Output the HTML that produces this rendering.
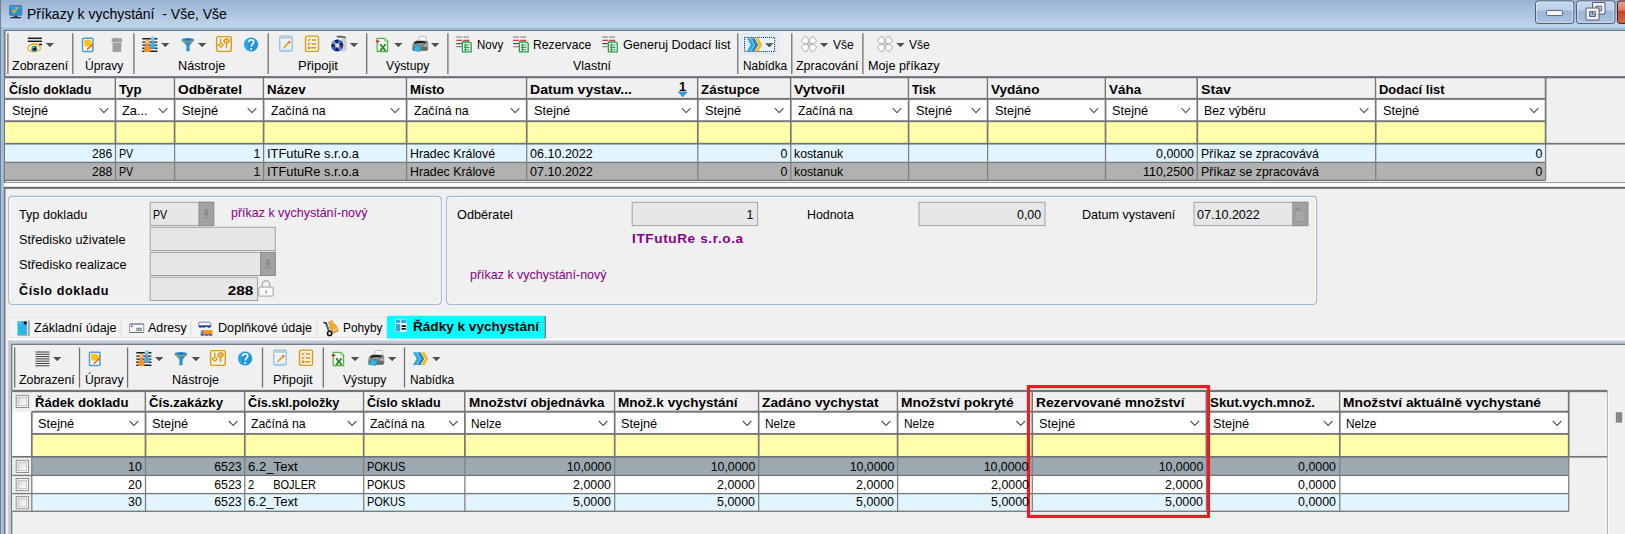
<!DOCTYPE html>
<html lang="cs"><head><meta charset="utf-8"><title>Příkazy k vychystání</title>
<style>
html,body{margin:0;padding:0;}
body{width:1625px;height:534px;position:relative;overflow:hidden;background:#f0f0f0;font-family:"Liberation Sans",sans-serif;font-size:13px;color:#000;}
div,span.t,svg{position:absolute;box-sizing:border-box;}
span.t{white-space:pre;display:block;}
svg{overflow:visible;}

</style></head>
<body>
<svg id="bg" width="1625" height="534" viewBox="0 0 1625 534" style="left:0;top:0"><defs>
<linearGradient id="gTitle" x1="0" y1="0" x2="0" y2="1"><stop offset="0" stop-color="#98b3d1"/><stop offset="1" stop-color="#c0d6ee"/></linearGradient>
<linearGradient id="gBtnT" x1="0" y1="0" x2="0" y2="1"><stop offset="0" stop-color="#c3d6ec"/><stop offset="0.42" stop-color="#bdd2ea"/><stop offset="0.43" stop-color="#9cb6d6"/><stop offset="1" stop-color="#a9c3e1"/></linearGradient>
<linearGradient id="gBtnR" x1="0" y1="0" x2="0" y2="1"><stop offset="0" stop-color="#e3a08f"/><stop offset="0.42" stop-color="#d8806c"/><stop offset="0.43" stop-color="#c0432a"/><stop offset="1" stop-color="#d26a4c"/></linearGradient>
<linearGradient id="gChk" x1="0" y1="0" x2="1" y2="1"><stop offset="0" stop-color="#d4d8dc"/><stop offset="1" stop-color="#ffffff"/></linearGradient>
</defs>
<rect x="0" y="0" width="1625" height="27.3" fill="url(#gTitle)" />
<rect x="0" y="27.3" width="1625" height="3" fill="#9db8da" />
<rect x="0" y="27" width="4.2" height="534" fill="#a4bfdf" />
<rect x="0" y="0" width="0.9" height="534" fill="#70798f" />
<rect x="4.2" y="30" width="1625" height="534" fill="#f0f0f0" />
<rect x="4" y="29.95" width="1621" height="1.1" fill="#797d84" />
<rect x="3.9" y="30" width="1.6" height="153" fill="#767676" />
<rect x="3.9" y="187" width="1.6" height="347" fill="#767676" />
<rect x="1535.6" y="1" width="38.2" height="22.4" rx="2.5" fill="url(#gBtnT)" stroke="#45526e" stroke-width="1"/>
<rect x="1536.6" y="2" width="36.2" height="20.4" rx="1.8" fill="none" stroke="#ffffff" stroke-opacity="0.55" stroke-width="1"/>
<rect x="1576.6" y="1" width="38.2" height="22.4" rx="2.5" fill="url(#gBtnT)" stroke="#45526e" stroke-width="1"/>
<rect x="1577.6" y="2" width="36.2" height="20.4" rx="1.8" fill="none" stroke="#ffffff" stroke-opacity="0.55" stroke-width="1"/>
<rect x="1617.5" y="1" width="20" height="22.4" rx="2.5" fill="url(#gBtnR)" stroke="#4a1a14" stroke-width="1"/>
<rect x="1546.6" y="10.4" width="16" height="5.2" rx="1" fill="#f4f4f4" stroke="#4a5068" stroke-width="0.9"/>
<path d="M1592.5 2.5h12.5v11.5h-12.5z M1596 6.2h5.5v4.6h-5.5z" fill="#f2f2f2" fill-rule="evenodd" stroke="#4a5068" stroke-width="0.9"/>
<path d="M1586 8h13v12h-13z M1589.6 11.6h5.8v4.9h-5.8z" fill="#f2f2f2" fill-rule="evenodd" stroke="#4a5068" stroke-width="0.9"/>
<rect x="7.25" y="33.2" width="1.3" height="40.8" fill="#727272" />
<rect x="72.15" y="33.2" width="1.3" height="40.8" fill="#727272" />
<rect x="133.25" y="33.2" width="1.3" height="40.8" fill="#727272" />
<rect x="267.55" y="33.2" width="1.3" height="40.8" fill="#727272" />
<rect x="366.05" y="33.2" width="1.3" height="40.8" fill="#727272" />
<rect x="447.25" y="33.2" width="1.3" height="40.8" fill="#727272" />
<rect x="737.15" y="33.2" width="1.3" height="40.8" fill="#727272" />
<rect x="791.15" y="33.2" width="1.3" height="40.8" fill="#727272" />
<rect x="862.25" y="33.2" width="1.3" height="40.8" fill="#727272" />
<path d="M45.4 44.1h9l-4.5 4.6z" fill="#ffffff" opacity="0.8"/>
<path d="M45.7 42.9h8.4l-4.2 4.3z" fill="#505050"/>
<path d="M160.8 44.1h9l-4.5 4.6z" fill="#ffffff" opacity="0.8"/>
<path d="M161.1 42.9h8.4l-4.2 4.3z" fill="#505050"/>
<path d="M197.6 44.1h9l-4.5 4.6z" fill="#ffffff" opacity="0.8"/>
<path d="M197.9 42.9h8.4l-4.2 4.3z" fill="#505050"/>
<path d="M349.5 44.1h9l-4.5 4.6z" fill="#ffffff" opacity="0.8"/>
<path d="M349.8 42.9h8.4l-4.2 4.3z" fill="#505050"/>
<path d="M393.8 44.1h9l-4.5 4.6z" fill="#ffffff" opacity="0.8"/>
<path d="M394.1 42.9h8.4l-4.2 4.3z" fill="#505050"/>
<path d="M430.7 44.1h9l-4.5 4.6z" fill="#ffffff" opacity="0.8"/>
<path d="M431 42.9h8.4l-4.2 4.3z" fill="#505050"/>
<rect x="741" y="34" width="37" height="20" rx="2.5" fill="#e5f1fb" stroke="#cde4f7" stroke-width="1"/>
<rect x="744.5" y="37.4" width="30.2" height="14.2" fill="none" stroke="#111" stroke-width="1" stroke-dasharray="1 1.05"/>
<path d="M764.8 44.4h9l-4.5 4.6z" fill="#ffffff" opacity="0.8"/>
<path d="M765.1 43.2h8.4l-4.2 4.3z" fill="#505050"/>
<path d="M819.6 44.1h9l-4.5 4.6z" fill="#ffffff" opacity="0.8"/>
<path d="M819.9 42.9h8.4l-4.2 4.3z" fill="#505050"/>
<path d="M896 44.1h9l-4.5 4.6z" fill="#ffffff" opacity="0.8"/>
<path d="M896.3 42.9h8.4l-4.2 4.3z" fill="#505050"/>
<rect x="5" y="77" width="1540.6" height="21.9" fill="#f0f0f0" />
<rect x="5" y="98.9" width="1540.6" height="22.3" fill="#ffffff" />
<rect x="5" y="121.2" width="1540.6" height="22.5" fill="#ffffac" />
<rect x="5" y="143.7" width="1540.6" height="18.7" fill="#e2f4fe" />
<rect x="5" y="162.4" width="1540.6" height="18" fill="#b1b1b1" />
<rect x="5.7" y="78.35" width="109.1" height="1.1" fill="#ffffff" />
<rect x="5.7" y="77.9" width="1.1" height="20.3" fill="#ffffff" />
<rect x="5.7" y="99.6" width="109.1" height="1" fill="#fbfbfb" />
<rect x="116.2" y="78.35" width="57.7" height="1.1" fill="#ffffff" />
<rect x="116.2" y="77.9" width="1.1" height="20.3" fill="#ffffff" />
<rect x="116.2" y="99.6" width="57.7" height="1" fill="#fbfbfb" />
<rect x="175.3" y="78.35" width="87.6" height="1.1" fill="#ffffff" />
<rect x="175.3" y="77.9" width="1.1" height="20.3" fill="#ffffff" />
<rect x="175.3" y="99.6" width="87.6" height="1" fill="#fbfbfb" />
<rect x="264.3" y="78.35" width="141.6" height="1.1" fill="#ffffff" />
<rect x="264.3" y="77.9" width="1.1" height="20.3" fill="#ffffff" />
<rect x="264.3" y="99.6" width="141.6" height="1" fill="#fbfbfb" />
<rect x="407.3" y="78.35" width="118.7" height="1.1" fill="#ffffff" />
<rect x="407.3" y="77.9" width="1.1" height="20.3" fill="#ffffff" />
<rect x="407.3" y="99.6" width="118.7" height="1" fill="#fbfbfb" />
<rect x="527.4" y="78.35" width="169.7" height="1.1" fill="#ffffff" />
<rect x="527.4" y="77.9" width="1.1" height="20.3" fill="#ffffff" />
<rect x="527.4" y="99.6" width="169.7" height="1" fill="#fbfbfb" />
<rect x="698.5" y="78.35" width="91.6" height="1.1" fill="#ffffff" />
<rect x="698.5" y="77.9" width="1.1" height="20.3" fill="#ffffff" />
<rect x="698.5" y="99.6" width="91.6" height="1" fill="#fbfbfb" />
<rect x="791.5" y="78.35" width="116.4" height="1.1" fill="#ffffff" />
<rect x="791.5" y="77.9" width="1.1" height="20.3" fill="#ffffff" />
<rect x="791.5" y="99.6" width="116.4" height="1" fill="#fbfbfb" />
<rect x="909.3" y="78.35" width="77.6" height="1.1" fill="#ffffff" />
<rect x="909.3" y="77.9" width="1.1" height="20.3" fill="#ffffff" />
<rect x="909.3" y="99.6" width="77.6" height="1" fill="#fbfbfb" />
<rect x="988.3" y="78.35" width="116.5" height="1.1" fill="#ffffff" />
<rect x="988.3" y="77.9" width="1.1" height="20.3" fill="#ffffff" />
<rect x="988.3" y="99.6" width="116.5" height="1" fill="#fbfbfb" />
<rect x="1106.2" y="78.35" width="90.4" height="1.1" fill="#ffffff" />
<rect x="1106.2" y="77.9" width="1.1" height="20.3" fill="#ffffff" />
<rect x="1106.2" y="99.6" width="90.4" height="1" fill="#fbfbfb" />
<rect x="1198" y="78.35" width="177" height="1.1" fill="#ffffff" />
<rect x="1198" y="77.9" width="1.1" height="20.3" fill="#ffffff" />
<rect x="1198" y="99.6" width="177" height="1" fill="#fbfbfb" />
<rect x="1376.4" y="78.35" width="168.5" height="1.1" fill="#ffffff" />
<rect x="1376.4" y="77.9" width="1.1" height="20.3" fill="#ffffff" />
<rect x="1376.4" y="99.6" width="168.5" height="1" fill="#fbfbfb" />
<rect x="5" y="76.05" width="1620" height="2.3" fill="#70757b" />
<rect x="5" y="97.9" width="1540.6" height="2" fill="#767676" />
<rect x="5" y="120.25" width="1540.6" height="1.9" fill="#767676" />
<rect x="5" y="142.85" width="1620" height="1.7" fill="#6f7276" />
<rect x="5" y="161.75" width="1540.6" height="1.3" fill="#767676" />
<rect x="5" y="179.75" width="1540.6" height="1.3" fill="#767676" />
<rect x="114.65" y="78" width="1.7" height="65.7" fill="#767676" />
<rect x="114.875" y="143.7" width="1.25" height="36.7" fill="#7e7e7e" />
<rect x="116.35" y="78.2" width="1" height="19.9" fill="#ffffff" />
<rect x="173.75" y="78" width="1.7" height="65.7" fill="#767676" />
<rect x="173.975" y="143.7" width="1.25" height="36.7" fill="#7e7e7e" />
<rect x="175.45" y="78.2" width="1" height="19.9" fill="#ffffff" />
<rect x="262.75" y="78" width="1.7" height="65.7" fill="#767676" />
<rect x="262.975" y="143.7" width="1.25" height="36.7" fill="#7e7e7e" />
<rect x="264.45" y="78.2" width="1" height="19.9" fill="#ffffff" />
<rect x="405.75" y="78" width="1.7" height="65.7" fill="#767676" />
<rect x="405.975" y="143.7" width="1.25" height="36.7" fill="#7e7e7e" />
<rect x="407.45" y="78.2" width="1" height="19.9" fill="#ffffff" />
<rect x="525.85" y="78" width="1.7" height="65.7" fill="#767676" />
<rect x="526.075" y="143.7" width="1.25" height="36.7" fill="#7e7e7e" />
<rect x="527.55" y="78.2" width="1" height="19.9" fill="#ffffff" />
<rect x="696.95" y="78" width="1.7" height="65.7" fill="#767676" />
<rect x="697.175" y="143.7" width="1.25" height="36.7" fill="#7e7e7e" />
<rect x="698.65" y="78.2" width="1" height="19.9" fill="#ffffff" />
<rect x="789.95" y="78" width="1.7" height="65.7" fill="#767676" />
<rect x="790.175" y="143.7" width="1.25" height="36.7" fill="#7e7e7e" />
<rect x="791.65" y="78.2" width="1" height="19.9" fill="#ffffff" />
<rect x="907.75" y="78" width="1.7" height="65.7" fill="#767676" />
<rect x="907.975" y="143.7" width="1.25" height="36.7" fill="#7e7e7e" />
<rect x="909.45" y="78.2" width="1" height="19.9" fill="#ffffff" />
<rect x="986.75" y="78" width="1.7" height="65.7" fill="#767676" />
<rect x="986.975" y="143.7" width="1.25" height="36.7" fill="#7e7e7e" />
<rect x="988.45" y="78.2" width="1" height="19.9" fill="#ffffff" />
<rect x="1104.65" y="78" width="1.7" height="65.7" fill="#767676" />
<rect x="1104.88" y="143.7" width="1.25" height="36.7" fill="#7e7e7e" />
<rect x="1106.35" y="78.2" width="1" height="19.9" fill="#ffffff" />
<rect x="1196.45" y="78" width="1.7" height="65.7" fill="#767676" />
<rect x="1196.67" y="143.7" width="1.25" height="36.7" fill="#7e7e7e" />
<rect x="1198.15" y="78.2" width="1" height="19.9" fill="#ffffff" />
<rect x="1374.85" y="78" width="1.7" height="65.7" fill="#767676" />
<rect x="1375.08" y="143.7" width="1.25" height="36.7" fill="#7e7e7e" />
<rect x="1376.55" y="78.2" width="1" height="19.9" fill="#ffffff" />
<rect x="1544.75" y="78" width="1.7" height="65.7" fill="#767676" />
<rect x="1544.97" y="143.7" width="1.25" height="36.7" fill="#7e7e7e" />
<path d="M99.6 108.2l4.3 4.4 4.3-4.4" fill="none" stroke="#555" stroke-width="1.1"/>
<path d="M158.7 108.2l4.3 4.4 4.3-4.4" fill="none" stroke="#555" stroke-width="1.1"/>
<path d="M247.7 108.2l4.3 4.4 4.3-4.4" fill="none" stroke="#555" stroke-width="1.1"/>
<path d="M390.7 108.2l4.3 4.4 4.3-4.4" fill="none" stroke="#555" stroke-width="1.1"/>
<path d="M510.8 108.2l4.3 4.4 4.3-4.4" fill="none" stroke="#555" stroke-width="1.1"/>
<path d="M681.9 108.2l4.3 4.4 4.3-4.4" fill="none" stroke="#555" stroke-width="1.1"/>
<path d="M774.9 108.2l4.3 4.4 4.3-4.4" fill="none" stroke="#555" stroke-width="1.1"/>
<path d="M892.7 108.2l4.3 4.4 4.3-4.4" fill="none" stroke="#555" stroke-width="1.1"/>
<path d="M971.7 108.2l4.3 4.4 4.3-4.4" fill="none" stroke="#555" stroke-width="1.1"/>
<path d="M1089.6 108.2l4.3 4.4 4.3-4.4" fill="none" stroke="#555" stroke-width="1.1"/>
<path d="M1181.4 108.2l4.3 4.4 4.3-4.4" fill="none" stroke="#555" stroke-width="1.1"/>
<path d="M1359.8 108.2l4.3 4.4 4.3-4.4" fill="none" stroke="#555" stroke-width="1.1"/>
<path d="M1529.7 108.2l4.3 4.4 4.3-4.4" fill="none" stroke="#555" stroke-width="1.1"/>
<path d="M678.3 91.9h8.8l-4.4 5z" fill="#2ea2ea" stroke="#2a5aa8" stroke-width="0.5"/>
<rect x="4" y="182.2" width="1621" height="1" fill="#8d8d8d" />
<rect x="3.9" y="183.2" width="1625" height="3.6" fill="#ffffff" />
<rect x="4" y="186.8" width="1621" height="2" fill="#6a6a6a" />
<rect x="8.6" y="196.4" width="432.59999999999997" height="107.9" rx="3.5" fill="none" stroke="#a3bbd9" stroke-width="1.2"/>
<rect x="9.7" y="197.5" width="430.4" height="105.7" rx="2.8" fill="none" stroke="#ffffff" stroke-opacity="0.8" stroke-width="0.9"/>
<rect x="446.6" y="196.4" width="869.9999999999999" height="107.9" rx="3.5" fill="none" stroke="#a3bbd9" stroke-width="1.2"/>
<rect x="447.70000000000005" y="197.5" width="867.7999999999998" height="105.7" rx="2.8" fill="none" stroke="#ffffff" stroke-opacity="0.8" stroke-width="0.9"/>
<rect x="150.2" y="202.3" width="63.5" height="23.299999999999983" fill="#e6e6e6" stroke="#a2a2a2" stroke-width="1"/>
<rect x="199.0" y="202.3" width="14.7" height="23.299999999999983" fill="#a2a2a2" stroke="#8c8c8c" stroke-width="1"/>
<path d="M205 209.1h2.6v3.6h2.4l-3.7 3.6-3.7-3.6h2.4z M202.7 217.2h7.2v1h-7.2z" fill="#8b8b8b"/>
<rect x="150.2" y="227.3" width="125.10000000000002" height="23.19999999999999" fill="#e6e6e6" stroke="#a2a2a2" stroke-width="1"/>
<rect x="150.2" y="252.4" width="125.10000000000002" height="23.099999999999994" fill="#e6e6e6" stroke="#a2a2a2" stroke-width="1"/>
<rect x="260.6" y="252.4" width="14.7" height="23.099999999999994" fill="#a2a2a2" stroke="#8c8c8c" stroke-width="1"/>
<path d="M266.7 259.1h2.6v3.6h2.4l-3.7 3.6-3.7-3.6h2.4z M264.4 267.2h7.2v1h-7.2z" fill="#8b8b8b"/>
<rect x="150.2" y="277.2" width="107.30000000000001" height="23.30000000000001" fill="#e6e6e6" stroke="#a2a2a2" stroke-width="1"/>
<rect x="632.2" y="202.3" width="125.39999999999998" height="23.299999999999983" fill="#e6e6e6" stroke="#a2a2a2" stroke-width="1"/>
<rect x="919" y="202.3" width="126" height="23.299999999999983" fill="#e6e6e6" stroke="#a2a2a2" stroke-width="1"/>
<rect x="1194" y="202.3" width="113.79999999999995" height="23.299999999999983" fill="#e6e6e6" stroke="#a2a2a2" stroke-width="1"/>
<rect x="1292.8" y="202.3" width="15" height="23.299999999999983" fill="#a2a2a2" stroke="#8c8c8c" stroke-width="1"/>
<path d="M1295.4 207.6h3.6v2.2h-3.6z" fill="#8a8a8a"/><path d="M1295.6 210.6h9.400v11h-9.400z" fill="none" stroke="#929292" stroke-width="0.800"/><path d="M1296.2 212h1.800v1.800h-1.800z M1299.400 212h2.200v1.800h-2.200z M1302.800 212h1.600v1.800h-1.600z M1296.2 215.600h1.800v1.800h-1.800z M1299.400 215.600h2.200v1.800h-2.200z M1302.800 215.600h1.600v1.800h-1.600z M1296.2 219.200h1.800v1.800h-1.800z M1299.400 219.200h2.200v1.800h-2.200z M1302.800 219.200h1.600v1.800h-1.600z" fill="#adadad"/>
<rect x="8.8" y="317.6" width="112.0" height="19.6" fill="#f3f3f3" stroke="#e6e6e6" stroke-width="1"/>
<rect x="121.7" y="317.6" width="69.10000000000001" height="19.6" fill="#f3f3f3" stroke="#e6e6e6" stroke-width="1"/>
<rect x="191.7" y="317.6" width="124.60000000000002" height="19.6" fill="#f3f3f3" stroke="#e6e6e6" stroke-width="1"/>
<rect x="317.2" y="317.6" width="68.60000000000002" height="19.6" fill="#f3f3f3" stroke="#e6e6e6" stroke-width="1"/>
<path d="M387 338.7v-20.6a2.3 2.3 0 0 1 2.3-2.3h155.4v22.9z" fill="#00ffff"/>
<rect x="544.65" y="316" width="1.1" height="22.6" fill="#5a5a5a" />
<rect x="8" y="338.7" width="1617" height="1.4" fill="#fafafa" />
<rect x="8.2" y="340.6" width="1625" height="3.2" fill="#bccbdd" />
<rect x="8.2" y="340.6" width="3.1" height="534" fill="#bccbdd" />
<rect x="11" y="343.65" width="1614" height="1.3" fill="#72777d" />
<rect x="11.05" y="344" width="1.3" height="190" fill="#72777d" />
<rect x="14.05" y="347.4" width="1.3" height="40.2" fill="#727272" />
<rect x="78.85" y="347.4" width="1.3" height="40.2" fill="#727272" />
<rect x="126.95" y="347.4" width="1.3" height="40.2" fill="#727272" />
<rect x="261.85" y="347.4" width="1.3" height="40.2" fill="#727272" />
<rect x="322.65" y="347.4" width="1.3" height="40.2" fill="#727272" />
<rect x="403.85" y="347.4" width="1.3" height="40.2" fill="#727272" />
<path d="M52.7 358.1h9l-4.5 4.6z" fill="#ffffff" opacity="0.8"/>
<path d="M53 356.9h8.4l-4.2 4.3z" fill="#505050"/>
<path d="M154.7 358.1h9l-4.5 4.6z" fill="#ffffff" opacity="0.8"/>
<path d="M155 356.9h8.4l-4.2 4.3z" fill="#505050"/>
<path d="M191.4 358.1h9l-4.5 4.6z" fill="#ffffff" opacity="0.8"/>
<path d="M191.7 356.9h8.4l-4.2 4.3z" fill="#505050"/>
<path d="M350.5 358.1h9l-4.5 4.6z" fill="#ffffff" opacity="0.8"/>
<path d="M350.8 356.9h8.4l-4.2 4.3z" fill="#505050"/>
<path d="M387.7 358.1h9l-4.5 4.6z" fill="#ffffff" opacity="0.8"/>
<path d="M388 356.9h8.4l-4.2 4.3z" fill="#505050"/>
<path d="M431.9 358.1h9l-4.5 4.6z" fill="#ffffff" opacity="0.8"/>
<path d="M432.2 356.9h8.4l-4.2 4.3z" fill="#505050"/>
<rect x="12.3" y="390.8" width="1556.4" height="20.9" fill="#f0f0f0" />
<rect x="12.3" y="411.7" width="1556.4" height="22.2" fill="#ffffff" />
<rect x="12.3" y="433.9" width="1556.4" height="22.9" fill="#ffffac" />
<rect x="12.3" y="433.9" width="19.5" height="22.9" fill="#ffffff" />
<rect x="12.3" y="456.8" width="1556.4" height="18.6" fill="#9ca9b1" />
<rect x="12.3" y="456.8" width="19.5" height="18.6" fill="#f0f0f0" />
<rect x="12.3" y="475.4" width="1556.4" height="18.2" fill="#ffffff" />
<rect x="12.3" y="475.4" width="19.5" height="18.2" fill="#f0f0f0" />
<rect x="12.3" y="493.6" width="1556.4" height="17.7" fill="#e2f4fe" />
<rect x="12.3" y="493.6" width="19.5" height="17.7" fill="#f0f0f0" />
<rect x="32.5" y="392.15" width="112.3" height="1.1" fill="#ffffff" />
<rect x="32.5" y="391.7" width="1.1" height="19.3" fill="#ffffff" />
<rect x="32.5" y="412.4" width="112.3" height="1" fill="#fbfbfb" />
<rect x="146.2" y="392.15" width="97.9" height="1.1" fill="#ffffff" />
<rect x="146.2" y="391.7" width="1.1" height="19.3" fill="#ffffff" />
<rect x="146.2" y="412.4" width="97.9" height="1" fill="#fbfbfb" />
<rect x="245.5" y="392.15" width="117.5" height="1.1" fill="#ffffff" />
<rect x="245.5" y="391.7" width="1.1" height="19.3" fill="#ffffff" />
<rect x="245.5" y="412.4" width="117.5" height="1" fill="#fbfbfb" />
<rect x="364.4" y="392.15" width="99.8" height="1.1" fill="#ffffff" />
<rect x="364.4" y="391.7" width="1.1" height="19.3" fill="#ffffff" />
<rect x="364.4" y="412.4" width="99.8" height="1" fill="#fbfbfb" />
<rect x="465.6" y="392.15" width="148.4" height="1.1" fill="#ffffff" />
<rect x="465.6" y="391.7" width="1.1" height="19.3" fill="#ffffff" />
<rect x="465.6" y="412.4" width="148.4" height="1" fill="#fbfbfb" />
<rect x="615.4" y="392.15" width="142.6" height="1.1" fill="#ffffff" />
<rect x="615.4" y="391.7" width="1.1" height="19.3" fill="#ffffff" />
<rect x="615.4" y="412.4" width="142.6" height="1" fill="#fbfbfb" />
<rect x="759.4" y="392.15" width="137.5" height="1.1" fill="#ffffff" />
<rect x="759.4" y="391.7" width="1.1" height="19.3" fill="#ffffff" />
<rect x="759.4" y="412.4" width="137.5" height="1" fill="#fbfbfb" />
<rect x="898.3" y="392.15" width="133.3" height="1.1" fill="#ffffff" />
<rect x="898.3" y="391.7" width="1.1" height="19.3" fill="#ffffff" />
<rect x="898.3" y="412.4" width="133.3" height="1" fill="#fbfbfb" />
<rect x="1033" y="392.15" width="172.7" height="1.1" fill="#ffffff" />
<rect x="1033" y="391.7" width="1.1" height="19.3" fill="#ffffff" />
<rect x="1033" y="412.4" width="172.7" height="1" fill="#fbfbfb" />
<rect x="1207.1" y="392.15" width="132" height="1.1" fill="#ffffff" />
<rect x="1207.1" y="391.7" width="1.1" height="19.3" fill="#ffffff" />
<rect x="1207.1" y="412.4" width="132" height="1" fill="#fbfbfb" />
<rect x="1340.5" y="392.15" width="227.5" height="1.1" fill="#ffffff" />
<rect x="1340.5" y="391.7" width="1.1" height="19.3" fill="#ffffff" />
<rect x="1340.5" y="412.4" width="227.5" height="1" fill="#fbfbfb" />
<rect x="12.3" y="389.85" width="1595.2" height="2.3" fill="#70757b" />
<rect x="31.8" y="410.7" width="1536.9" height="2" fill="#767676" />
<rect x="31.8" y="432.95" width="1536.9" height="1.9" fill="#767676" />
<rect x="12.3" y="455.95" width="1595.2" height="1.7" fill="#6f7276" />
<rect x="12.3" y="474.75" width="1556.4" height="1.3" fill="#767676" />
<rect x="12.3" y="492.95" width="1556.4" height="1.3" fill="#767676" />
<rect x="12.3" y="510.65" width="1556.4" height="1.3" fill="#767676" />
<rect x="30.95" y="411.7" width="1.7" height="45.1" fill="#767676" />
<rect x="31.175" y="456.8" width="1.25" height="54.5" fill="#7e7e7e" />
<rect x="32.65" y="392" width="1" height="18.9" fill="#ffffff" />
<rect x="144.65" y="391.8" width="1.7" height="65" fill="#767676" />
<rect x="144.875" y="456.8" width="1.25" height="54.5" fill="#7e7e7e" />
<rect x="146.35" y="392" width="1" height="18.9" fill="#ffffff" />
<rect x="243.95" y="391.8" width="1.7" height="65" fill="#767676" />
<rect x="244.175" y="456.8" width="1.25" height="54.5" fill="#7e7e7e" />
<rect x="245.65" y="392" width="1" height="18.9" fill="#ffffff" />
<rect x="362.85" y="391.8" width="1.7" height="65" fill="#767676" />
<rect x="363.075" y="456.8" width="1.25" height="54.5" fill="#7e7e7e" />
<rect x="364.55" y="392" width="1" height="18.9" fill="#ffffff" />
<rect x="464.05" y="391.8" width="1.7" height="65" fill="#767676" />
<rect x="464.275" y="456.8" width="1.25" height="54.5" fill="#7e7e7e" />
<rect x="465.75" y="392" width="1" height="18.9" fill="#ffffff" />
<rect x="613.85" y="391.8" width="1.7" height="65" fill="#767676" />
<rect x="614.075" y="456.8" width="1.25" height="54.5" fill="#7e7e7e" />
<rect x="615.55" y="392" width="1" height="18.9" fill="#ffffff" />
<rect x="757.85" y="391.8" width="1.7" height="65" fill="#767676" />
<rect x="758.075" y="456.8" width="1.25" height="54.5" fill="#7e7e7e" />
<rect x="759.55" y="392" width="1" height="18.9" fill="#ffffff" />
<rect x="896.75" y="391.8" width="1.7" height="65" fill="#767676" />
<rect x="896.975" y="456.8" width="1.25" height="54.5" fill="#7e7e7e" />
<rect x="898.45" y="392" width="1" height="18.9" fill="#ffffff" />
<rect x="1031.45" y="391.8" width="1.7" height="65" fill="#767676" />
<rect x="1031.67" y="456.8" width="1.25" height="54.5" fill="#7e7e7e" />
<rect x="1033.15" y="392" width="1" height="18.9" fill="#ffffff" />
<rect x="1205.55" y="391.8" width="1.7" height="65" fill="#767676" />
<rect x="1205.78" y="456.8" width="1.25" height="54.5" fill="#7e7e7e" />
<rect x="1207.25" y="392" width="1" height="18.9" fill="#ffffff" />
<rect x="1338.95" y="391.8" width="1.7" height="65" fill="#767676" />
<rect x="1339.17" y="456.8" width="1.25" height="54.5" fill="#7e7e7e" />
<rect x="1340.65" y="392" width="1" height="18.9" fill="#ffffff" />
<rect x="1567.85" y="391.8" width="1.7" height="65" fill="#767676" />
<rect x="1568.08" y="456.8" width="1.25" height="54.5" fill="#7e7e7e" />
<path d="M129.6 421l4.3 4.4 4.3-4.4" fill="none" stroke="#555" stroke-width="1.1"/>
<path d="M228.9 421l4.3 4.4 4.3-4.4" fill="none" stroke="#555" stroke-width="1.1"/>
<path d="M347.8 421l4.3 4.4 4.3-4.4" fill="none" stroke="#555" stroke-width="1.1"/>
<path d="M449 421l4.3 4.4 4.3-4.4" fill="none" stroke="#555" stroke-width="1.1"/>
<path d="M598.8 421l4.3 4.4 4.3-4.4" fill="none" stroke="#555" stroke-width="1.1"/>
<path d="M742.8 421l4.3 4.4 4.3-4.4" fill="none" stroke="#555" stroke-width="1.1"/>
<path d="M881.7 421l4.3 4.4 4.3-4.4" fill="none" stroke="#555" stroke-width="1.1"/>
<path d="M1016.4 421l4.3 4.4 4.3-4.4" fill="none" stroke="#555" stroke-width="1.1"/>
<path d="M1190.5 421l4.3 4.4 4.3-4.4" fill="none" stroke="#555" stroke-width="1.1"/>
<path d="M1323.9 421l4.3 4.4 4.3-4.4" fill="none" stroke="#555" stroke-width="1.1"/>
<path d="M1552.8 421l4.3 4.4 4.3-4.4" fill="none" stroke="#555" stroke-width="1.1"/>
<rect x="16.2" y="395.3" width="12.4" height="12.2" fill="#f4f4f4" stroke="#8e8f8f" stroke-width="1"/>
<rect x="18.2" y="397.3" width="8.4" height="8.2" fill="url(#gChk)" stroke="#b8bcc0" stroke-width="0.8"/>
<rect x="16.2" y="460.3" width="12.4" height="12.2" fill="#f4f4f4" stroke="#8e8f8f" stroke-width="1"/>
<rect x="18.2" y="462.3" width="8.4" height="8.2" fill="url(#gChk)" stroke="#b8bcc0" stroke-width="0.8"/>
<rect x="16.2" y="478.5" width="12.4" height="12.2" fill="#f4f4f4" stroke="#8e8f8f" stroke-width="1"/>
<rect x="18.2" y="480.5" width="8.4" height="8.2" fill="url(#gChk)" stroke="#b8bcc0" stroke-width="0.8"/>
<rect x="16.2" y="496.6" width="12.4" height="12.2" fill="#f4f4f4" stroke="#8e8f8f" stroke-width="1"/>
<rect x="18.2" y="498.6" width="8.4" height="8.2" fill="url(#gChk)" stroke="#b8bcc0" stroke-width="0.8"/>
<rect x="1607" y="390" width="1.2" height="144" fill="#b4b4b4" />
<rect x="1608.3" y="392" width="1" height="142" fill="#fdfdfd" />
<rect x="1615.8" y="412.2" width="6.4" height="10.4" fill="#858585" />
<rect x="1028.5" y="386.6" width="180" height="129.8" fill="none" stroke="#ed1c24" stroke-width="3.2"/></svg>
<svg width="13.6" height="13.6" viewBox="0 0 16 16" style="left:8.9px;top:4.9px"><rect x="0.800" y="0.700" width="14.200" height="11.400" rx="1.200" fill="#2098d6" stroke="#6c6aa6" stroke-width="1.300"/><path d="M1.600 1.500h12.600v2.600h-12.600z" fill="#4ab2e6" opacity="0.500"/><path d="M3.800 5.600l2.200 3.200 4.200-6.200" fill="none" stroke="#fdb01e" stroke-width="1.700"/><path d="M6.200 12.600h3.600l.8 1.800h-5.200z" fill="#34386a"/><path d="M2.400 14.200h11.200c.5 0 .8.300.8.800v.7h-12.800v-.7c0-.5.300-.8.800-.8z" fill="#23264e"/></svg>
<span class="t" style="top:3.85px;line-height:19px;height:19px;font-size:15.45px;left:27.4px;transform-origin:0 50%;transform:scaleX(0.9062);">Příkazy k vychystání  - Vše, Vše</span>
<svg width="16" height="16" viewBox="0 0 16 16" style="left:27px;top:36.5px"><path d="M0.8 1.3h14.2" stroke="#222" stroke-width="1.6"/><path d="M0.8 4.3h14.2" stroke="#111" stroke-width="1.4"/><path d="M12 7.5h3" stroke="#222" stroke-width="1.7"/><path d="M0.6 11.4c2.2-5.2 10.6-5.4 13.2-.2c-2.6 4.6-10.8 4.8-13.2.2z" fill="#fdf8e0" stroke="#e3b21c" stroke-width="1.2"/><path d="M1 9.4c2.6-3.4 8.4-3.6 11.4-1.4" fill="none" stroke="#e3b21c" stroke-width="1"/><circle cx="7.4" cy="11.8" r="3" fill="#1d86b8"/><circle cx="7.4" cy="11.9" r="1.7" fill="#08131c"/><circle cx="6.6" cy="10.8" r="0.7" fill="#fff"/></svg>
<svg width="16" height="16" viewBox="0 0 16 16" style="left:80.3px;top:36.5px"><rect x="2.5" y="1.2" width="10.4" height="13.2" rx="1" fill="#ffffff" stroke="#4a9bd6" stroke-width="1.5"/><path d="M4.3 2.8h5.4l2 1.8v5h-7.4z" fill="#fbc012"/><path d="M12.6 6.6l.9 1-5.2 5-1.7.6.5-1.7z" fill="#e0641a"/><path d="M7.1 12.5l-.5 .7.9-.2z" fill="#8a5a2a"/></svg>
<svg width="16" height="16" viewBox="0 0 16 16" style="left:108.5px;top:36.5px"><path d="M6.2 0.7h3.4v1.4h-3.4z" fill="#a4a4a4"/><path d="M2.6 1.9c0-.4.3-.6.6-.6h9.4c.4 0 .6.2.6.6v3h-10.6z" fill="#a0a0a0"/><path d="M3.5 5.4h8.8v8.8c0 .5-.3.8-.8.8h-7.2c-.5 0-.8-.3-.8-.8z" fill="#a2a2a2"/><path d="M5.5 6.2v7.6 M8 6.2v7.6 M10.4 6.2v7.6" stroke="#999" stroke-width="0.8"/></svg>
<svg width="16" height="16" viewBox="0 0 16 16" style="left:142px;top:36.5px"><path d="M0.3 1.7h15.1 M0.3 5.1h15.1 M0.3 8.1h15.1 M0.3 11.2h15.1 M0.3 14.2h15.1" stroke="#1c1c1c" stroke-width="1.4"/><path d="M8.400 11.800C6.600 11.800 7.800 6.400 10.700 3.400C13.600 6.400 14.900 11.800 13 11.800z" fill="#4ba8e0"/><circle cx="10.700" cy="1.800" r="2.200" fill="#5ab4e8"/><circle cx="10.300" cy="1.200" r="0.900" fill="#d4eefc"/><path d="M2.800 14.900C0.800 14.900 2.200 9.600 5.300 6.800C8.400 9.600 9.900 14.900 7.800 14.900z" fill="#f8922a"/><circle cx="5.300" cy="5.300" r="2.200" fill="#fba23a"/><circle cx="4.900" cy="4.700" r="0.900" fill="#ffe8cc"/></svg>
<svg width="16" height="16" viewBox="0 0 16 16" style="left:179.7px;top:36.5px"><path d="M1.5 2.9c0-2.700 12.700-2.700 12.700 0c0 1.100-3.200 3.400-4.400 5.400c-.5.900-.1 3.800-.2 5.600l-3.300.700c.2-2.200.3-5.500-.2-6.300c-1.200-2-4.600-4.300-4.600-5.400z" fill="#2e8ed0"/><path d="M3.600 2.600c1.400-.9 6.800-.9 8.400 0c-1.600.8-6.800.8-8.400 0z" fill="#1a6fb0"/><path d="M1.700 3.900c2.600 1.300 9.600 1.300 12.300 0" fill="none" stroke="#dba21e" stroke-width="0.9"/><path d="M3.200 4.400c1.200 1.600 2.800 2.600 3.200 4" fill="none" stroke="#7cc4ee" stroke-width="0.9"/></svg>
<svg width="16" height="16" viewBox="0 0 16 16" style="left:216px;top:36px"><rect x="0.6" y="0.600" width="14.700" height="14.800" rx="1.800" fill="none" stroke="#d99a0c" stroke-width="1.400"/><path d="M4.700 2.600v6 M10.500 2.600v9.600" stroke="#d99a0c" stroke-width="1.300"/><path d="M2.300 8.700c0-1.300 4.900-1.300 4.900 0c0 .9-1.200 1.300-2.400 2.500c-1.200-1.200-2.500-1.600-2.500-2.500z" fill="#f6e6c0" stroke="#d99a0c" stroke-width="1.200"/><ellipse cx="10.500" cy="5.100" rx="2.600" ry="2.100" fill="#f6e6c0" stroke="#d99a0c" stroke-width="1.300"/><path d="M9.200 5.100h2.600" stroke="#d99a0c" stroke-width="1"/></svg>
<svg width="16" height="16" viewBox="0 0 16 16" style="left:244.2px;top:36.5px"><circle cx="7.100" cy="7.500" r="7.100" fill="#1f95d8"/><path d="M7.100 0.400a7.100 7.100 0 0 0 0 14.200a9 9 0 0 1 0-14.200z" fill="#2ab2ea" opacity="0.700"/><path d="M4.700 5.200c0-3.200 5-3.300 5-.2c0 1.900-2.400 2.400-2.500 4.600" fill="none" stroke="#fff" stroke-width="1.700"/><circle cx="7.200" cy="12" r="1.100" fill="#fff"/></svg>
<svg width="16" height="16" viewBox="0 0 16 16" style="left:278px;top:36.3px"><rect x="1.800" y="0.200" width="12.300" height="15" rx="1.400" fill="#f4faff" stroke="#8dbbe6" stroke-width="1.300"/><path d="M2.500 0.800h10.900v2h-10.900z" fill="#aecbe8"/><path d="M3.600 1.200h1.300 M6 1.200h1.300 M8.400 1.200h1.300 M10.800 1.200h1.300" stroke="#e8d48a" stroke-width="1"/><path d="M3.400 5.600h9 M3.400 7.800h9 M3.400 10h9 M3.400 12.200h9" stroke="#d6e6f4" stroke-width="0.700"/><path d="M2.300 13.600h11.400v1.200h-11.400z" fill="#a8c8e6"/><path d="M11.200 4.800l1.400 1.400-5.200 5.200-2 .8.600-2.200z" fill="#f5a623"/><path d="M11.200 4.800l1.400 1.400-.9.900-1.400-1.400z" fill="#d9432f"/><path d="M5.400 12.200l.3-1 .7.700z" fill="#444"/></svg>
<svg width="16" height="16" viewBox="0 0 16 16" style="left:304px;top:36.3px"><rect x="1.500" y="0.200" width="13" height="15.200" rx="1.300" fill="none" stroke="#d99a0c" stroke-width="1.300"/><path d="M3.500 3.600l1.100 1.100 1.900-2.100 M3.500 7.500l1.100 1.100 1.900-2.100" fill="none" stroke="#d99a0c" stroke-width="1.100"/><path d="M7.800 4h4.400 M7.800 7.900h4.400 M7 11.800h5.200" stroke="#d99a0c" stroke-width="1.500"/><circle cx="5" cy="11.800" r="1.500" fill="#d99a0c"/></svg>
<svg width="16" height="16" viewBox="0 0 16 16" style="left:330.8px;top:36.4px"><path d="M5.200 0.300c2-.4 6.400-.4 9.600.6v13.400c-.6.600-2.400.8-3.600.6v-13.400z" fill="#f6f6f6" stroke="#a0a0a0" stroke-width="0.700"/><path d="M12.300 1.200h2.300v13h-2.300z" fill="#cfcfcf"/><path d="M6.400 0.800c2.400-.2 5.400 0 8 .7" fill="none" stroke="#1a1a1a" stroke-width="1"/><circle cx="6.300" cy="9.400" r="6" fill="#14205c"/><path d="M6.300 9.400l-5.700-1.800a6 6 0 0 1 2.600-3.400z" fill="#6ea0e6"/><path d="M6.300 9.400l1.400-5.800a6 6 0 0 1 3.400 2.400z" fill="#3b78d8"/><path d="M6.300 9.400l5.400 2.600a6 6 0 0 1-3.600 3.100z" fill="#5a8ee0"/><path d="M6.300 9.400l-2.600 5.400a6 6 0 0 1-3-3.400z" fill="#2c5cc0"/><path d="M6.300 9.400l5.900-.6a6 6 0 0 1-.5 3.200z" fill="#7a2c8c" opacity="0.700"/><circle cx="6.300" cy="9.400" r="2.200" fill="#f2ecd8"/><circle cx="6.300" cy="9.400" r="0.900" fill="#fff" stroke="#c8b060" stroke-width="0.500"/></svg>
<svg width="16" height="16" viewBox="0 0 16 16" style="left:374.5px;top:36.5px"><path d="M2.200 1.300h7.600l2.800 2.600v10.600h-10.400z" fill="#ffffff" stroke="#5cb050" stroke-width="1.300"/><path d="M9.800 1.300v2.700h2.800" fill="#dff0dc" stroke="#5cb050" stroke-width="0.800"/><path d="M4.600 7.600h2.400 M8.800 7.600h2.400 M4.600 13.400h2.400 M8.800 13.400h2.400" stroke="#2a8a30" stroke-width="0.800"/><path d="M5.400 7.600l5 5.800 M10.400 7.600l-5 5.800" stroke="#2a8a30" stroke-width="1.700"/><rect x="0.800" y="3.600" width="3.500" height="1.700" rx="0.400" fill="#d4141c"/></svg>
<svg width="16" height="16" viewBox="0 0 16 16" style="left:411.6px;top:36px"><path d="M7.600 0.400h6.200l1 5.600h-8.600z" fill="#fafafa" stroke="#a8a8a8" stroke-width="0.700"/><path d="M0.400 9.400c0-2.200 2.200-4.600 4.400-4.800l9.400.2c1.200.2 2 1.200 2 2.400v5.600c0 1-.8 1.800-1.800 1.800h-12.200c-1 0-1.800-.8-1.800-1.800z" fill="#8c8c8c"/><path d="M2.200 6.400c2.600-1.800 8.800-1.800 11.600-.6l-.6 1.800c-3-.8-8.400-.6-10.400.4z" fill="#1e1e1e"/><path d="M12.200 8.600h3.400v4.800h-3.400z" fill="#b4b4b4"/><path d="M0.600 10.800h15v2.600c0 .8-.6 1.400-1.400 1.400h-12.200c-.8 0-1.400-.6-1.400-1.400z" fill="#6a6a6a"/><path d="M3.400 9.600l6.200.8-1.800 5.200-7-1.200z" fill="#35b6e6" stroke="#1c7ea8" stroke-width="0.500"/></svg>
<svg width="16" height="16" viewBox="0 0 16 16" style="left:456px;top:35.8px"><path d="M0.200 1.100h5.800 M7.200 1.100h5.800" stroke="#a2a2a2" stroke-width="1.500"/><path d="M0.200 4.300h5.800 M7.200 4.300h5.800" stroke="#dc3c3c" stroke-width="1.300"/><path d="M0.200 7.600h5.600" stroke="#3c3c3c" stroke-width="1.100"/><path d="M0.200 10.700h5.600" stroke="#7a7a7a" stroke-width="1.100"/><path d="M6.400 6h6.800l2 1.400v8.400h-8.800z" fill="#f6fff6" stroke="#2e9a4c" stroke-width="1.300"/><path d="M8 9h5.400 M8 11.400h5.400 M8 13.800h5.400 M9.400 7.600v7.600" stroke="#2e9a4c" stroke-width="1.100"/></svg>
<svg width="16" height="16" viewBox="0 0 16 16" style="left:512.8px;top:35.8px"><path d="M0.200 1.100h5.800 M7.200 1.100h5.800" stroke="#a2a2a2" stroke-width="1.500"/><path d="M0.200 4.300h5.800 M7.200 4.300h5.800" stroke="#dc3c3c" stroke-width="1.300"/><path d="M0.200 7.600h5.600" stroke="#3c3c3c" stroke-width="1.100"/><path d="M0.200 10.700h5.600" stroke="#7a7a7a" stroke-width="1.100"/><path d="M6.400 6h6.800l2 1.400v8.400h-8.800z" fill="#f6fff6" stroke="#2e9a4c" stroke-width="1.300"/><path d="M8 9h5.400 M8 11.400h5.400 M8 13.800h5.400 M9.400 7.600v7.600" stroke="#2e9a4c" stroke-width="1.100"/></svg>
<svg width="16" height="16" viewBox="0 0 16 16" style="left:602px;top:35.8px"><path d="M0.200 1.100h5.800 M7.200 1.100h5.800" stroke="#a2a2a2" stroke-width="1.500"/><path d="M0.200 4.300h5.800 M7.200 4.300h5.800" stroke="#dc3c3c" stroke-width="1.300"/><path d="M0.200 7.600h5.600" stroke="#3c3c3c" stroke-width="1.100"/><path d="M0.200 10.700h5.600" stroke="#7a7a7a" stroke-width="1.100"/><path d="M6.400 6h6.800l2 1.400v8.400h-8.800z" fill="#f6fff6" stroke="#2e9a4c" stroke-width="1.300"/><path d="M8 9h5.400 M8 11.400h5.400 M8 13.800h5.400 M9.400 7.600v7.600" stroke="#2e9a4c" stroke-width="1.100"/></svg>
<svg width="16" height="16" viewBox="0 0 16 16" style="left:745.5px;top:36.5px"><path d="M1 1.300h3.400l3.600 6.400-3.600 6.400h-3.400l3.600-6.400z" fill="#27aae2"/><path d="M5.200 1.300h3.400l3.600 6.400-3.600 6.400h-3.400l3.600-6.400z" fill="#1f86c8"/><path d="M4.700 1.300h.9l3.600 6.400-3.600 6.400h-.9l3.600-6.400z" fill="#8aa4b8"/><path d="M9.400 1.300h3.200l3.600 6.400-3.600 6.400h-3.200l3.600-6.400z" fill="#fdb813"/></svg>
<svg width="16" height="16" viewBox="0 0 16 16" style="left:800.6px;top:36px"><g fill="#fdfdfd" stroke="#adadad" stroke-width="1"><path d="M7.300 7.500c-1.600 0-4.100.4-5.800-1c-1.400-1.200-1-3.600.8-3.800c0-2 2.600-2.800 4-1.400c1.200 1.400 1 4.200 1 6.200z"/><path d="M8.700 7.500c1.600 0 4.100.4 5.800-1c1.400-1.200 1-3.600-.8-3.800c0-2-2.600-2.800-4-1.400c-1.200 1.400-1 4.200-1 6.200z"/><path d="M7.300 8.700c-1.600 0-4.100-.4-5.800 1c-1.400 1.200-1 3.600.8 3.800c0 2 2.600 2.800 4 1.400c1.200-1.400 1-4.200 1-6.200z"/><path d="M8.700 8.700c1.600 0 4.100-.4 5.800 1c1.400 1.200 1 3.600-.8 3.800c0 2-2.600 2.800-4 1.400c-1.200-1.400-1-4.200-1-6.200z"/></g></svg>
<svg width="16" height="16" viewBox="0 0 16 16" style="left:877px;top:36px"><g fill="#fdfdfd" stroke="#adadad" stroke-width="1"><path d="M7.300 7.500c-1.600 0-4.100.4-5.800-1c-1.400-1.200-1-3.600.8-3.800c0-2 2.600-2.800 4-1.400c1.200 1.400 1 4.200 1 6.200z"/><path d="M8.700 7.500c1.600 0 4.100.4 5.800-1c1.400-1.200 1-3.600-.8-3.800c0-2-2.600-2.800-4-1.400c-1.200 1.400-1 4.200-1 6.200z"/><path d="M7.300 8.700c-1.600 0-4.100-.4-5.800 1c-1.400 1.200-1 3.600.8 3.800c0 2 2.600 2.800 4 1.400c1.200-1.400 1-4.200 1-6.200z"/><path d="M8.700 8.700c1.600 0 4.100-.4 5.800 1c1.400 1.200 1 3.600-.8 3.800c0 2-2.600 2.800-4 1.400c-1.200-1.400-1-4.200-1-6.200z"/></g></svg>
<span class="t" style="top:36.06px;line-height:17px;height:17px;font-size:13.39px;left:477.2px;transform-origin:0 50%;transform:scaleX(0.8598);">Novy</span>
<span class="t" style="top:36.06px;line-height:17px;height:17px;font-size:13.39px;left:533.3px;transform-origin:0 50%;transform:scaleX(0.9135);">Rezervace</span>
<span class="t" style="top:36.06px;line-height:17px;height:17px;font-size:13.39px;left:622.5px;transform-origin:0 50%;transform:scaleX(0.9451);">Generuj Dodací list</span>
<span class="t" style="top:36.06px;line-height:17px;height:17px;font-size:13.39px;left:832.5px;transform-origin:0 50%;transform:scaleX(0.9025);">Vše</span>
<span class="t" style="top:36.06px;line-height:17px;height:17px;font-size:13.39px;left:908.7px;transform-origin:0 50%;transform:scaleX(0.9025);">Vše</span>
<span class="t" style="top:56.66px;line-height:17px;height:17px;font-size:13.39px;left:12px;transform-origin:0 50%;transform:scaleX(0.9349);">Zobrazení</span>
<span class="t" style="top:56.66px;line-height:17px;height:17px;font-size:13.39px;left:85px;transform-origin:0 50%;transform:scaleX(0.904);">Úpravy</span>
<span class="t" style="top:56.66px;line-height:17px;height:17px;font-size:13.39px;left:178px;transform-origin:0 50%;transform:scaleX(0.9497);">Nástroje</span>
<span class="t" style="top:56.66px;line-height:17px;height:17px;font-size:13.39px;left:297.5px;transform-origin:0 50%;transform:scaleX(0.9784);">Připojit</span>
<span class="t" style="top:56.66px;line-height:17px;height:17px;font-size:13.39px;left:385.8px;transform-origin:0 50%;transform:scaleX(0.9122);">Výstupy</span>
<span class="t" style="top:56.66px;line-height:17px;height:17px;font-size:13.39px;left:573.3px;transform-origin:0 50%;transform:scaleX(0.9293);">Vlastní</span>
<span class="t" style="top:56.66px;line-height:17px;height:17px;font-size:13.39px;left:742.5px;transform-origin:0 50%;transform:scaleX(0.8873);">Nabídka</span>
<span class="t" style="top:56.66px;line-height:17px;height:17px;font-size:13.39px;left:796.3px;transform-origin:0 50%;transform:scaleX(0.9326);">Zpracování</span>
<span class="t" style="top:56.66px;line-height:17px;height:17px;font-size:13.39px;left:867.5px;transform-origin:0 50%;transform:scaleX(0.9457);">Moje příkazy</span>
<span class="t" style="top:80.76px;line-height:17px;height:17px;font-size:13.39px;font-weight:bold;left:8.6px;transform-origin:0 50%;transform:scaleX(0.9408);">Číslo dokladu</span>
<span class="t" style="top:80.76px;line-height:17px;height:17px;font-size:13.39px;font-weight:bold;left:119.1px;transform-origin:0 50%;transform:scaleX(0.9875);">Typ</span>
<span class="t" style="top:80.76px;line-height:17px;height:17px;font-size:13.39px;font-weight:bold;left:178.2px;transform-origin:0 50%;transform:scaleX(1.0251);">Odběratel</span>
<span class="t" style="top:80.76px;line-height:17px;height:17px;font-size:13.39px;font-weight:bold;left:267.20000000000005px;transform-origin:0 50%;transform:scaleX(0.9984);">Název</span>
<span class="t" style="top:80.76px;line-height:17px;height:17px;font-size:13.39px;font-weight:bold;left:410.20000000000005px;transform-origin:0 50%;transform:scaleX(0.9851);">Místo</span>
<span class="t" style="top:80.76px;line-height:17px;height:17px;font-size:13.39px;font-weight:bold;left:530.3000000000001px;transform-origin:0 50%;transform:scaleX(1.0501);">Datum vystav...</span>
<span class="t" style="top:80.76px;line-height:17px;height:17px;font-size:13.39px;font-weight:bold;left:701.4px;transform-origin:0 50%;transform:scaleX(1.0014);">Zástupce</span>
<span class="t" style="top:80.76px;line-height:17px;height:17px;font-size:13.39px;font-weight:bold;left:794.4px;transform-origin:0 50%;transform:scaleX(1.0461);">Vytvořil</span>
<span class="t" style="top:80.76px;line-height:17px;height:17px;font-size:13.39px;font-weight:bold;left:912.2px;transform-origin:0 50%;transform:scaleX(0.8936);">Tisk</span>
<span class="t" style="top:80.76px;line-height:17px;height:17px;font-size:13.39px;font-weight:bold;left:991.2px;transform-origin:0 50%;transform:scaleX(1.0123);">Vydáno</span>
<span class="t" style="top:80.76px;line-height:17px;height:17px;font-size:13.39px;font-weight:bold;left:1109.1px;transform-origin:0 50%;transform:scaleX(1.0041);">Váha</span>
<span class="t" style="top:80.76px;line-height:17px;height:17px;font-size:13.39px;font-weight:bold;left:1200.8999999999999px;transform-origin:0 50%;transform:scaleX(1.0619);">Stav</span>
<span class="t" style="top:80.76px;line-height:17px;height:17px;font-size:13.39px;font-weight:bold;left:1379.3px;transform-origin:0 50%;transform:scaleX(0.9685);">Dodací list</span>
<span class="t" style="top:101.86px;line-height:17px;height:17px;font-size:13.39px;left:11.9px;transform-origin:0 50%;transform:scaleX(0.9545);">Stejné</span>
<span class="t" style="top:101.86px;line-height:17px;height:17px;font-size:13.39px;left:122.4px;transform-origin:0 50%;transform:scaleX(0.953);">Za...</span>
<span class="t" style="top:101.86px;line-height:17px;height:17px;font-size:13.39px;left:181.5px;transform-origin:0 50%;transform:scaleX(0.9545);">Stejné</span>
<span class="t" style="top:101.86px;line-height:17px;height:17px;font-size:13.39px;left:270.5px;transform-origin:0 50%;transform:scaleX(0.9196);">Začíná na</span>
<span class="t" style="top:101.86px;line-height:17px;height:17px;font-size:13.39px;left:413.5px;transform-origin:0 50%;transform:scaleX(0.9196);">Začíná na</span>
<span class="t" style="top:101.86px;line-height:17px;height:17px;font-size:13.39px;left:533.6px;transform-origin:0 50%;transform:scaleX(0.9545);">Stejné</span>
<span class="t" style="top:101.86px;line-height:17px;height:17px;font-size:13.39px;left:704.6999999999999px;transform-origin:0 50%;transform:scaleX(0.9545);">Stejné</span>
<span class="t" style="top:101.86px;line-height:17px;height:17px;font-size:13.39px;left:797.6999999999999px;transform-origin:0 50%;transform:scaleX(0.9196);">Začíná na</span>
<span class="t" style="top:101.86px;line-height:17px;height:17px;font-size:13.39px;left:915.5px;transform-origin:0 50%;transform:scaleX(0.9545);">Stejné</span>
<span class="t" style="top:101.86px;line-height:17px;height:17px;font-size:13.39px;left:994.5px;transform-origin:0 50%;transform:scaleX(0.9545);">Stejné</span>
<span class="t" style="top:101.86px;line-height:17px;height:17px;font-size:13.39px;left:1112.4px;transform-origin:0 50%;transform:scaleX(0.9545);">Stejné</span>
<span class="t" style="top:101.86px;line-height:17px;height:17px;font-size:13.39px;left:1204.2px;transform-origin:0 50%;transform:scaleX(0.9207);">Bez výběru</span>
<span class="t" style="top:101.86px;line-height:17px;height:17px;font-size:13.39px;left:1382.6000000000001px;transform-origin:0 50%;transform:scaleX(0.9545);">Stejné</span>
<span class="t" style="top:144.56px;line-height:17px;height:17px;font-size:13.39px;right:1513.0px;transform-origin:100% 50%;transform:scaleX(0.9052);">286</span>
<span class="t" style="top:144.56px;line-height:17px;height:17px;font-size:13.39px;left:119.1px;transform-origin:0 50%;transform:scaleX(0.7959);">PV</span>
<span class="t" style="top:144.56px;line-height:17px;height:17px;font-size:13.39px;right:1364.9px;transform-origin:100% 50%;transform:scaleX(0.925);">1</span>
<span class="t" style="top:144.56px;line-height:17px;height:17px;font-size:13.39px;left:267.20000000000005px;transform-origin:0 50%;transform:scaleX(0.9594);">ITFutuRe s.r.o.a</span>
<span class="t" style="top:144.56px;line-height:17px;height:17px;font-size:13.39px;left:410.20000000000005px;transform-origin:0 50%;transform:scaleX(0.9221);">Hradec Králové</span>
<span class="t" style="top:144.56px;line-height:17px;height:17px;font-size:13.39px;left:530.3000000000001px;transform-origin:0 50%;transform:scaleX(0.9381);">06.10.2022</span>
<span class="t" style="top:144.56px;line-height:17px;height:17px;font-size:13.39px;right:837.7px;transform-origin:100% 50%;transform:scaleX(0.925);">0</span>
<span class="t" style="top:144.56px;line-height:17px;height:17px;font-size:13.39px;left:794.4px;transform-origin:0 50%;transform:scaleX(0.9172);">kostanuk</span>
<span class="t" style="top:144.56px;line-height:17px;height:17px;font-size:13.39px;right:431.2px;transform-origin:100% 50%;transform:scaleX(0.925);">0,0000</span>
<span class="t" style="top:144.56px;line-height:17px;height:17px;font-size:13.39px;left:1200.8999999999999px;transform-origin:0 50%;transform:scaleX(0.9213);">Příkaz se zpracovává</span>
<span class="t" style="top:144.56px;line-height:17px;height:17px;font-size:13.39px;right:82.9px;transform-origin:100% 50%;transform:scaleX(0.925);">0</span>
<span class="t" style="top:162.56px;line-height:17px;height:17px;font-size:13.39px;right:1513.0px;transform-origin:100% 50%;transform:scaleX(0.9052);">288</span>
<span class="t" style="top:162.56px;line-height:17px;height:17px;font-size:13.39px;left:119.1px;transform-origin:0 50%;transform:scaleX(0.7959);">PV</span>
<span class="t" style="top:162.56px;line-height:17px;height:17px;font-size:13.39px;right:1364.9px;transform-origin:100% 50%;transform:scaleX(0.925);">1</span>
<span class="t" style="top:162.56px;line-height:17px;height:17px;font-size:13.39px;left:267.20000000000005px;transform-origin:0 50%;transform:scaleX(0.9594);">ITFutuRe s.r.o.a</span>
<span class="t" style="top:162.56px;line-height:17px;height:17px;font-size:13.39px;left:410.20000000000005px;transform-origin:0 50%;transform:scaleX(0.9221);">Hradec Králové</span>
<span class="t" style="top:162.56px;line-height:17px;height:17px;font-size:13.39px;left:530.3000000000001px;transform-origin:0 50%;transform:scaleX(0.9381);">07.10.2022</span>
<span class="t" style="top:162.56px;line-height:17px;height:17px;font-size:13.39px;right:837.7px;transform-origin:100% 50%;transform:scaleX(0.925);">0</span>
<span class="t" style="top:162.56px;line-height:17px;height:17px;font-size:13.39px;left:794.4px;transform-origin:0 50%;transform:scaleX(0.9172);">kostanuk</span>
<span class="t" style="top:162.56px;line-height:17px;height:17px;font-size:13.39px;right:431.2px;transform-origin:100% 50%;transform:scaleX(0.925);">110,2500</span>
<span class="t" style="top:162.56px;line-height:17px;height:17px;font-size:13.39px;left:1200.8999999999999px;transform-origin:0 50%;transform:scaleX(0.9213);">Příkaz se zpracovává</span>
<span class="t" style="top:162.56px;line-height:17px;height:17px;font-size:13.39px;right:82.9px;transform-origin:100% 50%;transform:scaleX(0.925);">0</span>
<span class="t" style="top:79.19px;line-height:16.5px;height:16.5px;font-size:12.88px;font-weight:bold;left:679.0px;transform-origin:0 50%;transform:scaleX(1.0);">1</span>
<svg width="18" height="18" viewBox="0 0 16 16" style="left:257.4px;top:279.2px"><path d="M4.600 7.400v-2.400a3.400 3.400 0 0 1 6.800 0v2.400" fill="none" stroke="#b0b0b0" stroke-width="1.300"/><rect x="1.600" y="7.200" width="12.800" height="8" rx="1" fill="#fbfbfb" stroke="#b4b4b4" stroke-width="1.200"/><rect x="7.300" y="10" width="1.500" height="2.700" fill="#a8a8a8"/></svg>
<span class="t" style="top:206.06px;line-height:17px;height:17px;font-size:13.39px;left:19.2px;transform-origin:0 50%;transform:scaleX(0.947);">Typ dokladu</span>
<span class="t" style="top:230.76px;line-height:17px;height:17px;font-size:13.39px;left:19.2px;transform-origin:0 50%;transform:scaleX(0.9487);">Středisko uživatele</span>
<span class="t" style="top:255.76px;line-height:17px;height:17px;font-size:13.39px;left:19.2px;transform-origin:0 50%;transform:scaleX(0.9514);">Středisko realizace</span>
<span class="t" style="top:281.66px;line-height:17px;height:17px;font-size:13.39px;font-weight:bold;left:19.2px;transform-origin:0 50%;letter-spacing:0.61px;transform:scaleX(0.9408);">Číslo dokladu</span>
<span class="t" style="top:206.06px;line-height:17px;height:17px;font-size:13.39px;left:153.3px;transform-origin:0 50%;transform:scaleX(0.7959);">PV</span>
<span class="t" style="top:281.66px;line-height:17px;height:17px;font-size:13.39px;font-weight:bold;right:1371.8px;transform-origin:100% 50%;transform:scaleX(1.1427);">288</span>
<span class="t" style="top:203.86px;line-height:17px;height:17px;font-size:13.39px;color:#8a008a;left:231.3px;transform-origin:0 50%;transform:scaleX(0.9322);">příkaz k vychystání-nový</span>
<span class="t" style="top:206.06px;line-height:17px;height:17px;font-size:13.39px;left:457.2px;transform-origin:0 50%;transform:scaleX(0.95);">Odběratel</span>
<span class="t" style="top:206.06px;line-height:17px;height:17px;font-size:13.39px;right:871.5px;transform-origin:100% 50%;transform:scaleX(0.925);">1</span>
<span class="t" style="top:229.76px;line-height:17px;height:17px;font-size:13.39px;font-weight:bold;color:#8a008a;left:632px;transform-origin:0 50%;letter-spacing:0.6px;transform:scaleX(1.0167);">ITFutuRe s.r.o.a</span>
<span class="t" style="top:265.66px;line-height:17px;height:17px;font-size:13.39px;color:#8a008a;left:469.5px;transform-origin:0 50%;transform:scaleX(0.9322);">příkaz k vychystání-nový</span>
<span class="t" style="top:206.06px;line-height:17px;height:17px;font-size:13.39px;left:806.9px;transform-origin:0 50%;transform:scaleX(0.9255);">Hodnota</span>
<span class="t" style="top:206.06px;line-height:17px;height:17px;font-size:13.39px;right:583.8px;transform-origin:100% 50%;transform:scaleX(0.922);">0,00</span>
<span class="t" style="top:206.06px;line-height:17px;height:17px;font-size:13.39px;left:1081.9px;transform-origin:0 50%;transform:scaleX(0.9367);">Datum vystavení</span>
<span class="t" style="top:206.06px;line-height:17px;height:17px;font-size:13.39px;left:1197px;transform-origin:0 50%;transform:scaleX(0.9381);">07.10.2022</span>
<svg width="16" height="16" viewBox="0 0 16 16" style="left:16.5px;top:320.1px"><path d="M0.500 1h9.800v14h-9.800z" fill="#2eb4e6"/><path d="M0.500 1h4v3h-4z" fill="#52c4ee"/><path d="M10.300 1h1v14.400h-1z" fill="#f6f6f6"/><path d="M11.500 0.600h0.900v15h-0.900z" fill="#5a5a5a"/><path d="M0.300 15h12v0.800h-12z" fill="#8a8a8a" opacity="0.700"/><circle cx="8.300" cy="2.900" r="1.600" fill="#0a0a0a"/></svg>
<svg width="15" height="15" viewBox="0 0 16 16" style="left:128.5px;top:320.4px"><rect x="0.500" y="4.300" width="15.200" height="9" rx="0.600" fill="#ffffff" stroke="#8095a4" stroke-width="1"/><path d="M0.500 4.300h15.200" stroke="#4f7f9c" stroke-width="1"/><path d="M1 13.300h14.600" stroke="#555" stroke-width="0.800"/><circle cx="2.900" cy="6.700" r="1.100" fill="#e8203c"/><path d="M7.600 8.800h6.200 M7.600 10.800h6.200" stroke="#5a6a74" stroke-width="1.200"/></svg>
<svg width="15" height="15" viewBox="0 0 16 16" style="left:198.4px;top:321.3px"><path d="M0.800 2.200c0-.6.400-1 1-1h9.600c1.400 0 2.400 1.400 2.400 2.800v1h-13z" fill="#fafcff" stroke="#2a3c90" stroke-width="0.700"/><path d="M0.600 5h13.400v1.500h-13.400z" fill="#2a3a8c"/><path d="M1.600 6.600h2v0.900h-2z M5 6.600h2v0.900h-2z M10.600 6.600h2v0.900h-2z" fill="#2a3a8c"/><path d="M5.400 9.600h10v4.600h-10z" fill="#f7941d"/><path d="M2.900 11.200l1.400-1.600h1.200v4.600h-2.600z" fill="#5a86d8"/><path d="M2.700 14.200h12.800v1h-12.800z" fill="#2a3a8c"/><path d="M3.600 15.200h2v0.800h-2z M8 15.200h2v0.800h-2z M12.400 15.200h2v0.800h-2z" fill="#20306c"/></svg>
<svg width="16" height="16" viewBox="0 0 16 16" style="left:323.1px;top:319.9px"><path d="M0.400 2.400l2.600.8 3.600 9.800" fill="none" stroke="#1a1a1a" stroke-width="1.500"/><path d="M3.600 4l3.600 9.600 7.600-3" fill="none" stroke="#2c7cc0" stroke-width="1.200"/><path d="M5 2.200l4.200-1.800 1.800 4-4.200 1.800z" fill="#f5ae34" stroke="#d08c18" stroke-width="0.500"/><path d="M6.400 6.800l6-2.600 3.200 6.200-6.200 2.800z" fill="#f2a82c" stroke="#d08c18" stroke-width="0.500"/><path d="M10.400 10.600l3.600-1.600" stroke="#e8e0d0" stroke-width="1.100"/><circle cx="6.600" cy="13.400" r="2.100" fill="#fff" stroke="#111" stroke-width="1.500"/></svg>
<svg width="13.5" height="13.5" viewBox="0 0 16 16" style="left:395.2px;top:319.4px"><rect x="0.400" y="0.400" width="13.400" height="15" rx="0.600" fill="#f4fbff" stroke="#9abcd4" stroke-width="0.800"/><path d="M1.200 1.200h5v3.400h-5z M7.400 1.200h5.800v3.400h-5.800z" fill="#3aa8e0"/><path d="M1.200 6h5v8.600h-5z" fill="#35a4de"/><path d="M7.400 6h5.800v8.600h-5.800z" fill="#fdfdfd"/><path d="M7.800 8.400h5 M7.800 11.800h5" stroke="#0c1420" stroke-width="2"/></svg>
<span class="t" style="top:319.46px;line-height:17px;height:17px;font-size:13.39px;left:34.2px;transform-origin:0 50%;transform:scaleX(0.9403);">Základní údaje</span>
<span class="t" style="top:319.46px;line-height:17px;height:17px;font-size:13.39px;left:148.3px;transform-origin:0 50%;transform:scaleX(0.9297);">Adresy</span>
<span class="t" style="top:319.46px;line-height:17px;height:17px;font-size:13.39px;left:218.3px;transform-origin:0 50%;transform:scaleX(0.9434);">Doplňkové údaje</span>
<span class="t" style="top:319.46px;line-height:17px;height:17px;font-size:13.39px;left:343.3px;transform-origin:0 50%;transform:scaleX(0.8854);">Pohyby</span>
<span class="t" style="top:317.76px;line-height:17px;height:17px;font-size:13.39px;font-weight:bold;left:413.3px;transform-origin:0 50%;transform:scaleX(1.0148);">Řádky k vychystání</span>
<svg width="16" height="16" viewBox="0 0 16 16" style="left:34.5px;top:350.5px"><path d="M0.5 1h14 M0.5 3.3h14 M0.5 5.6h14 M0.5 7.9h14 M0.5 10.2h14 M0.5 12.5h14 M0.5 14.8h14" stroke="#2a2a2a" stroke-width="0.9"/></svg>
<svg width="16" height="16" viewBox="0 0 16 16" style="left:87.4px;top:350.5px"><rect x="2.5" y="1.2" width="10.4" height="13.2" rx="1" fill="#ffffff" stroke="#4a9bd6" stroke-width="1.5"/><path d="M4.3 2.8h5.4l2 1.8v5h-7.4z" fill="#fbc012"/><path d="M12.6 6.6l.9 1-5.2 5-1.7.6.5-1.7z" fill="#e0641a"/><path d="M7.1 12.5l-.5 .7.9-.2z" fill="#8a5a2a"/></svg>
<svg width="16" height="16" viewBox="0 0 16 16" style="left:136px;top:350.5px"><path d="M0.3 1.7h15.1 M0.3 5.1h15.1 M0.3 8.1h15.1 M0.3 11.2h15.1 M0.3 14.2h15.1" stroke="#1c1c1c" stroke-width="1.4"/><path d="M8.400 11.800C6.600 11.800 7.800 6.400 10.700 3.400C13.600 6.400 14.900 11.800 13 11.800z" fill="#4ba8e0"/><circle cx="10.700" cy="1.800" r="2.200" fill="#5ab4e8"/><circle cx="10.300" cy="1.200" r="0.900" fill="#d4eefc"/><path d="M2.800 14.900C0.800 14.900 2.200 9.600 5.300 6.800C8.400 9.600 9.900 14.900 7.800 14.900z" fill="#f8922a"/><circle cx="5.300" cy="5.300" r="2.200" fill="#fba23a"/><circle cx="4.900" cy="4.700" r="0.900" fill="#ffe8cc"/></svg>
<svg width="16" height="16" viewBox="0 0 16 16" style="left:173.3px;top:350.5px"><path d="M1.5 2.9c0-2.700 12.700-2.700 12.700 0c0 1.100-3.200 3.400-4.400 5.400c-.5.900-.1 3.800-.2 5.600l-3.300.700c.2-2.200.3-5.500-.2-6.300c-1.200-2-4.600-4.300-4.600-5.400z" fill="#2e8ed0"/><path d="M3.600 2.600c1.400-.9 6.800-.9 8.400 0c-1.600.8-6.800.8-8.400 0z" fill="#1a6fb0"/><path d="M1.700 3.900c2.600 1.300 9.600 1.300 12.300 0" fill="none" stroke="#dba21e" stroke-width="0.9"/><path d="M3.200 4.400c1.200 1.600 2.800 2.600 3.200 4" fill="none" stroke="#7cc4ee" stroke-width="0.9"/></svg>
<svg width="16" height="16" viewBox="0 0 16 16" style="left:209.7px;top:350px"><rect x="0.6" y="0.600" width="14.700" height="14.800" rx="1.800" fill="none" stroke="#d99a0c" stroke-width="1.400"/><path d="M4.700 2.600v6 M10.500 2.600v9.600" stroke="#d99a0c" stroke-width="1.300"/><path d="M2.300 8.700c0-1.300 4.900-1.300 4.900 0c0 .9-1.200 1.300-2.400 2.500c-1.200-1.200-2.500-1.600-2.500-2.500z" fill="#f6e6c0" stroke="#d99a0c" stroke-width="1.200"/><ellipse cx="10.500" cy="5.100" rx="2.600" ry="2.100" fill="#f6e6c0" stroke="#d99a0c" stroke-width="1.300"/><path d="M9.200 5.100h2.600" stroke="#d99a0c" stroke-width="1"/></svg>
<svg width="16" height="16" viewBox="0 0 16 16" style="left:238.3px;top:350.5px"><circle cx="7.100" cy="7.500" r="7.100" fill="#1f95d8"/><path d="M7.100 0.400a7.100 7.100 0 0 0 0 14.200a9 9 0 0 1 0-14.200z" fill="#2ab2ea" opacity="0.700"/><path d="M4.700 5.200c0-3.200 5-3.300 5-.2c0 1.900-2.400 2.400-2.500 4.600" fill="none" stroke="#fff" stroke-width="1.700"/><circle cx="7.200" cy="12" r="1.100" fill="#fff"/></svg>
<svg width="16" height="16" viewBox="0 0 16 16" style="left:272.2px;top:350.3px"><rect x="1.800" y="0.200" width="12.300" height="15" rx="1.400" fill="#f4faff" stroke="#8dbbe6" stroke-width="1.300"/><path d="M2.500 0.800h10.900v2h-10.900z" fill="#aecbe8"/><path d="M3.600 1.200h1.300 M6 1.200h1.300 M8.400 1.200h1.300 M10.800 1.200h1.300" stroke="#e8d48a" stroke-width="1"/><path d="M3.400 5.600h9 M3.400 7.800h9 M3.400 10h9 M3.400 12.200h9" stroke="#d6e6f4" stroke-width="0.700"/><path d="M2.300 13.600h11.400v1.200h-11.400z" fill="#a8c8e6"/><path d="M11.200 4.800l1.400 1.400-5.200 5.200-2 .8.600-2.200z" fill="#f5a623"/><path d="M11.200 4.800l1.400 1.400-.9.900-1.400-1.400z" fill="#d9432f"/><path d="M5.400 12.200l.3-1 .7.700z" fill="#444"/></svg>
<svg width="16" height="16" viewBox="0 0 16 16" style="left:298.3px;top:350.3px"><rect x="1.500" y="0.200" width="13" height="15.200" rx="1.300" fill="none" stroke="#d99a0c" stroke-width="1.300"/><path d="M3.500 3.600l1.100 1.100 1.900-2.100 M3.500 7.500l1.100 1.100 1.900-2.100" fill="none" stroke="#d99a0c" stroke-width="1.100"/><path d="M7.800 4h4.400 M7.800 7.900h4.400 M7 11.800h5.200" stroke="#d99a0c" stroke-width="1.500"/><circle cx="5" cy="11.800" r="1.500" fill="#d99a0c"/></svg>
<svg width="16" height="16" viewBox="0 0 16 16" style="left:330.6px;top:350.5px"><path d="M2.200 1.300h7.600l2.800 2.600v10.600h-10.400z" fill="#ffffff" stroke="#5cb050" stroke-width="1.300"/><path d="M9.800 1.300v2.700h2.800" fill="#dff0dc" stroke="#5cb050" stroke-width="0.800"/><path d="M4.600 7.600h2.400 M8.800 7.600h2.400 M4.600 13.400h2.400 M8.800 13.400h2.400" stroke="#2a8a30" stroke-width="0.800"/><path d="M5.400 7.600l5 5.800 M10.400 7.600l-5 5.800" stroke="#2a8a30" stroke-width="1.700"/><rect x="0.800" y="3.600" width="3.500" height="1.700" rx="0.400" fill="#d4141c"/></svg>
<svg width="16" height="16" viewBox="0 0 16 16" style="left:368.3px;top:350px"><path d="M7.600 0.400h6.200l1 5.600h-8.600z" fill="#fafafa" stroke="#a8a8a8" stroke-width="0.700"/><path d="M0.400 9.400c0-2.200 2.200-4.600 4.400-4.800l9.400.2c1.200.2 2 1.200 2 2.400v5.600c0 1-.8 1.800-1.800 1.800h-12.200c-1 0-1.800-.8-1.800-1.800z" fill="#8c8c8c"/><path d="M2.200 6.400c2.600-1.800 8.800-1.800 11.600-.6l-.6 1.800c-3-.8-8.400-.6-10.400.4z" fill="#1e1e1e"/><path d="M12.200 8.600h3.400v4.800h-3.400z" fill="#b4b4b4"/><path d="M0.600 10.800h15v2.600c0 .8-.6 1.400-1.400 1.400h-12.200c-.8 0-1.400-.6-1.400-1.400z" fill="#6a6a6a"/><path d="M3.400 9.600l6.200.8-1.800 5.200-7-1.200z" fill="#35b6e6" stroke="#1c7ea8" stroke-width="0.500"/></svg>
<svg width="16" height="16" viewBox="0 0 16 16" style="left:412px;top:350.5px"><path d="M1 1.300h3.400l3.600 6.400-3.600 6.400h-3.400l3.600-6.400z" fill="#27aae2"/><path d="M5.200 1.300h3.400l3.600 6.400-3.600 6.400h-3.400l3.600-6.400z" fill="#1f86c8"/><path d="M4.700 1.300h.9l3.600 6.400-3.600 6.400h-.9l3.600-6.400z" fill="#8aa4b8"/><path d="M9.400 1.300h3.200l3.600 6.400-3.600 6.400h-3.200l3.600-6.400z" fill="#fdb813"/></svg>
<span class="t" style="top:370.86px;line-height:17px;height:17px;font-size:13.39px;left:19.2px;transform-origin:0 50%;transform:scaleX(0.9266);">Zobrazení</span>
<span class="t" style="top:370.86px;line-height:17px;height:17px;font-size:13.39px;left:84.5px;transform-origin:0 50%;transform:scaleX(0.9088);">Úpravy</span>
<span class="t" style="top:370.86px;line-height:17px;height:17px;font-size:13.39px;left:171.7px;transform-origin:0 50%;transform:scaleX(0.9437);">Nástroje</span>
<span class="t" style="top:370.86px;line-height:17px;height:17px;font-size:13.39px;left:273.3px;transform-origin:0 50%;transform:scaleX(0.9711);">Připojit</span>
<span class="t" style="top:370.86px;line-height:17px;height:17px;font-size:13.39px;left:342.5px;transform-origin:0 50%;transform:scaleX(0.9101);">Výstupy</span>
<span class="t" style="top:370.86px;line-height:17px;height:17px;font-size:13.39px;left:409.5px;transform-origin:0 50%;transform:scaleX(0.8873);">Nabídka</span>
<span class="t" style="top:394.16px;line-height:17px;height:17px;font-size:13.39px;font-weight:bold;left:35.4px;transform-origin:0 50%;transform:scaleX(0.9818);">Řádek dokladu</span>
<span class="t" style="top:394.16px;line-height:17px;height:17px;font-size:13.39px;font-weight:bold;left:149.1px;transform-origin:0 50%;transform:scaleX(0.9854);">Čís.zakázky</span>
<span class="t" style="top:394.16px;line-height:17px;height:17px;font-size:13.39px;font-weight:bold;left:248.4px;transform-origin:0 50%;transform:scaleX(0.9459);">Čís.skl.položky</span>
<span class="t" style="top:394.16px;line-height:17px;height:17px;font-size:13.39px;font-weight:bold;left:367.3px;transform-origin:0 50%;transform:scaleX(0.9342);">Číslo skladu</span>
<span class="t" style="top:394.16px;line-height:17px;height:17px;font-size:13.39px;font-weight:bold;left:468.5px;transform-origin:0 50%;transform:scaleX(1.0073);">Množství objednávka</span>
<span class="t" style="top:394.16px;line-height:17px;height:17px;font-size:13.39px;font-weight:bold;left:618.3000000000001px;transform-origin:0 50%;transform:scaleX(1.012);">Množ.k vychystání</span>
<span class="t" style="top:394.16px;line-height:17px;height:17px;font-size:13.39px;font-weight:bold;left:762.3000000000001px;transform-origin:0 50%;transform:scaleX(1.032);">Zadáno vychystat</span>
<span class="t" style="top:394.16px;line-height:17px;height:17px;font-size:13.39px;font-weight:bold;left:901.2px;transform-origin:0 50%;transform:scaleX(1.0307);">Množství pokryté</span>
<span class="t" style="top:394.16px;line-height:17px;height:17px;font-size:13.39px;font-weight:bold;left:1035.8999999999999px;transform-origin:0 50%;transform:scaleX(1.0298);">Rezervované množství</span>
<span class="t" style="top:394.16px;line-height:17px;height:17px;font-size:13.39px;font-weight:bold;left:1210.0px;transform-origin:0 50%;transform:scaleX(0.9949);">Skut.vych.množ.</span>
<span class="t" style="top:394.16px;line-height:17px;height:17px;font-size:13.39px;font-weight:bold;left:1343.3999999999999px;transform-origin:0 50%;transform:scaleX(1.0325);">Množství aktuálně vychystané</span>
<span class="t" style="top:414.86px;line-height:17px;height:17px;font-size:13.39px;left:38.3px;transform-origin:0 50%;transform:scaleX(0.9545);">Stejné</span>
<span class="t" style="top:414.86px;line-height:17px;height:17px;font-size:13.39px;left:152.0px;transform-origin:0 50%;transform:scaleX(0.9545);">Stejné</span>
<span class="t" style="top:414.86px;line-height:17px;height:17px;font-size:13.39px;left:251.3px;transform-origin:0 50%;transform:scaleX(0.9196);">Začíná na</span>
<span class="t" style="top:414.86px;line-height:17px;height:17px;font-size:13.39px;left:370.2px;transform-origin:0 50%;transform:scaleX(0.9196);">Začíná na</span>
<span class="t" style="top:414.86px;line-height:17px;height:17px;font-size:13.39px;left:471.4px;transform-origin:0 50%;transform:scaleX(0.8919);">Nelze</span>
<span class="t" style="top:414.86px;line-height:17px;height:17px;font-size:13.39px;left:621.2px;transform-origin:0 50%;transform:scaleX(0.9545);">Stejné</span>
<span class="t" style="top:414.86px;line-height:17px;height:17px;font-size:13.39px;left:765.2px;transform-origin:0 50%;transform:scaleX(0.8919);">Nelze</span>
<span class="t" style="top:414.86px;line-height:17px;height:17px;font-size:13.39px;left:904.1px;transform-origin:0 50%;transform:scaleX(0.8919);">Nelze</span>
<span class="t" style="top:414.86px;line-height:17px;height:17px;font-size:13.39px;left:1038.8px;transform-origin:0 50%;transform:scaleX(0.9545);">Stejné</span>
<span class="t" style="top:414.86px;line-height:17px;height:17px;font-size:13.39px;left:1212.9px;transform-origin:0 50%;transform:scaleX(0.9545);">Stejné</span>
<span class="t" style="top:414.86px;line-height:17px;height:17px;font-size:13.39px;left:1346.3px;transform-origin:0 50%;transform:scaleX(0.8919);">Nelze</span>
<span class="t" style="top:457.56px;line-height:17px;height:17px;font-size:13.39px;right:1483.0px;transform-origin:100% 50%;transform:scaleX(0.925);">10</span>
<span class="t" style="top:457.56px;line-height:17px;height:17px;font-size:13.39px;right:1383.7px;transform-origin:100% 50%;transform:scaleX(0.925);">6523</span>
<span class="t" style="top:457.56px;line-height:17px;height:17px;font-size:13.39px;left:248.4px;transform-origin:0 50%;transform:scaleX(0.983);">6.2_Text</span>
<span class="t" style="top:457.56px;line-height:17px;height:17px;font-size:13.39px;left:367.3px;transform-origin:0 50%;transform:scaleX(0.8179);">POKUS</span>
<span class="t" style="top:457.56px;line-height:17px;height:17px;font-size:13.39px;right:1013.8px;transform-origin:100% 50%;transform:scaleX(0.925);">10,0000</span>
<span class="t" style="top:457.56px;line-height:17px;height:17px;font-size:13.39px;right:869.8px;transform-origin:100% 50%;transform:scaleX(0.925);">10,0000</span>
<span class="t" style="top:457.56px;line-height:17px;height:17px;font-size:13.39px;right:730.9px;transform-origin:100% 50%;transform:scaleX(0.925);">10,0000</span>
<span class="t" style="top:457.56px;line-height:17px;height:17px;font-size:13.39px;right:596.2px;transform-origin:100% 50%;transform:scaleX(0.925);">10,0000</span>
<span class="t" style="top:457.56px;line-height:17px;height:17px;font-size:13.39px;right:422.1px;transform-origin:100% 50%;transform:scaleX(0.925);">10,0000</span>
<span class="t" style="top:457.56px;line-height:17px;height:17px;font-size:13.39px;right:288.7px;transform-origin:100% 50%;transform:scaleX(0.925);">0,0000</span>
<span class="t" style="top:475.76px;line-height:17px;height:17px;font-size:13.39px;right:1483.0px;transform-origin:100% 50%;transform:scaleX(0.925);">20</span>
<span class="t" style="top:475.76px;line-height:17px;height:17px;font-size:13.39px;right:1383.7px;transform-origin:100% 50%;transform:scaleX(0.925);">6523</span>
<span class="t" style="top:475.76px;line-height:17px;height:17px;font-size:13.39px;left:248.4px;transform-origin:0 50%;word-spacing:0.9px;transform:scaleX(0.8238);">2     BOJLER</span>
<span class="t" style="top:475.76px;line-height:17px;height:17px;font-size:13.39px;left:367.3px;transform-origin:0 50%;transform:scaleX(0.8179);">POKUS</span>
<span class="t" style="top:475.76px;line-height:17px;height:17px;font-size:13.39px;right:1013.8px;transform-origin:100% 50%;transform:scaleX(0.925);">2,0000</span>
<span class="t" style="top:475.76px;line-height:17px;height:17px;font-size:13.39px;right:869.8px;transform-origin:100% 50%;transform:scaleX(0.925);">2,0000</span>
<span class="t" style="top:475.76px;line-height:17px;height:17px;font-size:13.39px;right:730.9px;transform-origin:100% 50%;transform:scaleX(0.925);">2,0000</span>
<span class="t" style="top:475.76px;line-height:17px;height:17px;font-size:13.39px;right:596.2px;transform-origin:100% 50%;transform:scaleX(0.925);">2,0000</span>
<span class="t" style="top:475.76px;line-height:17px;height:17px;font-size:13.39px;right:422.1px;transform-origin:100% 50%;transform:scaleX(0.925);">2,0000</span>
<span class="t" style="top:475.76px;line-height:17px;height:17px;font-size:13.39px;right:288.7px;transform-origin:100% 50%;transform:scaleX(0.925);">0,0000</span>
<span class="t" style="top:493.46px;line-height:17px;height:17px;font-size:13.39px;right:1483.0px;transform-origin:100% 50%;transform:scaleX(0.925);">30</span>
<span class="t" style="top:493.46px;line-height:17px;height:17px;font-size:13.39px;right:1383.7px;transform-origin:100% 50%;transform:scaleX(0.925);">6523</span>
<span class="t" style="top:493.46px;line-height:17px;height:17px;font-size:13.39px;left:248.4px;transform-origin:0 50%;transform:scaleX(0.983);">6.2_Text</span>
<span class="t" style="top:493.46px;line-height:17px;height:17px;font-size:13.39px;left:367.3px;transform-origin:0 50%;transform:scaleX(0.8179);">POKUS</span>
<span class="t" style="top:493.46px;line-height:17px;height:17px;font-size:13.39px;right:1013.8px;transform-origin:100% 50%;transform:scaleX(0.925);">5,0000</span>
<span class="t" style="top:493.46px;line-height:17px;height:17px;font-size:13.39px;right:869.8px;transform-origin:100% 50%;transform:scaleX(0.925);">5,0000</span>
<span class="t" style="top:493.46px;line-height:17px;height:17px;font-size:13.39px;right:730.9px;transform-origin:100% 50%;transform:scaleX(0.925);">5,0000</span>
<span class="t" style="top:493.46px;line-height:17px;height:17px;font-size:13.39px;right:596.2px;transform-origin:100% 50%;transform:scaleX(0.925);">5,0000</span>
<span class="t" style="top:493.46px;line-height:17px;height:17px;font-size:13.39px;right:422.1px;transform-origin:100% 50%;transform:scaleX(0.925);">5,0000</span>
<span class="t" style="top:493.46px;line-height:17px;height:17px;font-size:13.39px;right:288.7px;transform-origin:100% 50%;transform:scaleX(0.925);">0,0000</span>
</body></html>
